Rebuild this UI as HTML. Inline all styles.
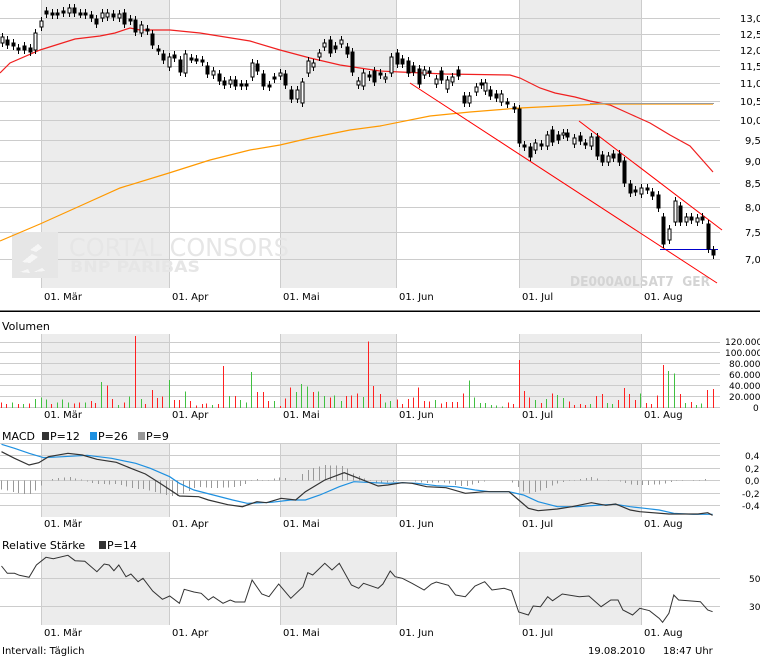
<!DOCTYPE html>
<html><head><meta charset="utf-8">
<style>
html,body{margin:0;padding:0;background:#fff;width:760px;height:657px;overflow:hidden}
svg{display:block}
text{font-family:"DejaVu Sans","Liberation Sans",sans-serif;font-size:10px;fill:#000}
.ax text{font-size:10px}
</style></head><body>
<svg id="s" width="760" height="657" viewBox="0 0 760 657" xmlns="http://www.w3.org/2000/svg" shape-rendering="crispEdges">
<g id="bands" fill="#ececec">
<rect x="41" y="0" width="128" height="288"/><rect x="280" y="0" width="116" height="288"/><rect x="519" y="0" width="122" height="288"/>
<rect x="41" y="334" width="128" height="74"/><rect x="280" y="334" width="116" height="74"/><rect x="519" y="334" width="122" height="74"/>
<rect x="41" y="443" width="128" height="74"/><rect x="280" y="443" width="116" height="74"/><rect x="519" y="443" width="122" height="74"/>
<rect x="41" y="552" width="128" height="73"/><rect x="280" y="552" width="116" height="73"/><rect x="519" y="552" width="122" height="73"/>
</g>
<g id="grid" stroke="#cccccc" stroke-width="1"></g>
<!-- watermark -->
<rect x="12" y="232" width="46" height="46" fill="#e6e6e6"/>
<g fill="#f6f6f6"><path d="M22 262 l10 -8 l6 3 l-8 6z M30 250 l8 -6 l4 4 l-6 4z M20 272 l8 -3 l2 4z M34 272 l8 -4 l3 3z"/></g>
<text x="69" y="256" textLength="220" lengthAdjust="spacingAndGlyphs" style="font-size:25px;fill:#e6e6e6;font-family:'DejaVu Sans',sans-serif">CORTAL CONSORS</text>
<text x="70" y="272" textLength="130" lengthAdjust="spacingAndGlyphs" style="font-size:16px;font-weight:bold;fill:#e6e6e6">BNP PARIBAS</text>
<text x="570" y="286" textLength="140" lengthAdjust="spacingAndGlyphs" style="font-size:13px;font-weight:bold;fill:#d4d4d4">DE000A0LSAT7&#160; GER</text>
<g id="main" shape-rendering="auto"></g>
<line x1="0" y1="311" x2="760" y2="311" stroke="#000" stroke-width="1.5"/>
<g class="ax">
<text x="740" y="22">13,0</text><text x="740" y="38">12,5</text><text x="740" y="54">12,0</text><text x="740" y="70">11,5</text><text x="740" y="87">11,0</text><text x="740" y="105">10,5</text><text x="740" y="124">10,0</text><text x="745" y="144">9,5</text><text x="745" y="165">9,0</text><text x="745" y="187">8,5</text><text x="745" y="211">8,0</text><text x="745" y="236">7,5</text><text x="745" y="263">7,0</text>
</g>
<g id="dates"></g>
<text x="2" y="330" style="font-size:11px">Volumen</text>
<g style="font-size:9px" class="vl">
<text x="725" y="345" style="font-size:9px">120.000</text><text x="725" y="356" style="font-size:9px">100.000</text><text x="729" y="367" style="font-size:9px">80.000</text><text x="729" y="378" style="font-size:9px">60.000</text><text x="729" y="389" style="font-size:9px">40.000</text><text x="729" y="400" style="font-size:9px">20.000</text><text x="753" y="411" style="font-size:9px">0</text>
</g>
<text x="2" y="440" style="font-size:11px">MACD</text>
<rect x="42" y="432" width="7" height="8" fill="#333"/><text x="50" y="440" style="font-size:11px">P=12</text>
<rect x="90" y="432" width="7" height="8" fill="#1e90e0"/><text x="98" y="440" style="font-size:11px">P=26</text>
<rect x="138" y="432" width="7" height="8" fill="#999"/><text x="146" y="440" style="font-size:11px">P=9</text>
<text x="745" y="459" style="font-size:9px">0,4</text><text x="745" y="472" style="font-size:9px">0,2</text><text x="745" y="484" style="font-size:9px">0,0</text><text x="742" y="497" style="font-size:9px">-0,2</text><text x="742" y="509" style="font-size:9px">-0,4</text>
<text x="2" y="549" style="font-size:11px">Relative Stärke</text>
<rect x="99" y="541" width="7" height="8" fill="#333"/><text x="107" y="549" style="font-size:11px">P=14</text>
<text x="749" y="582" style="font-size:9px">50</text><text x="749" y="610" style="font-size:9px">30</text>
<text x="2" y="654" style="font-size:10px">Intervall: Täglich</text>
<text x="588" y="654" style="font-size:10px">19.08.2010</text>
<text x="663" y="654" style="font-size:10px">18:47 Uhr</text>
</svg>
<script>
var NS="http://www.w3.org/2000/svg";
function el(p,t,a){var e=document.createElementNS(NS,t);for(var k in a)e.setAttribute(k,a[k]);p.appendChild(e);return e;}
var G=document.getElementById('grid'),M=document.getElementById('main'),D=document.getElementById('dates');
[18,34,50,66,83,101,120,140,161,183,207,232,259].forEach(function(y){el(G,'line',{x1:0,x2:720,y1:y+.5,y2:y+.5});});
[342,352,363,374,385,396,407].forEach(function(y){el(G,'line',{x1:0,x2:720,y1:y+.5,y2:y+.5});});
[443,455,468,480,493,505].forEach(function(y){el(G,'line',{x1:0,x2:720,y1:y+.5,y2:y+.5});});
[578,606].forEach(function(y){el(G,'line',{x1:0,x2:720,y1:y+.5,y2:y+.5});});
[[0,288],[334,408],[443,517],[552,625]].forEach(function(r){[41,169,280,396,519,641].forEach(function(x){el(G,'line',{x1:x+.5,x2:x+.5,y1:r[0],y2:r[1]});});});
var dl=[["01. Mär",44],["01. Apr",172],["01. Mai",283],["01. Jun",399],["01. Jul",522],["01. Aug",644]];
[300,418,527,636].forEach(function(y){dl.forEach(function(d){var t=el(D,'text',{x:d[1],y:y});t.textContent=d[0];});});
function pl(pts,col,w,sx,oy,sy){var s=pts.map(function(p){return (p[0]*(sx||1)).toFixed(1)+","+((oy||0)+p[1]*(sy||1)).toFixed(1);}).join(" ");el(M,'polyline',{points:s,fill:'none',stroke:col,'stroke-width':w||1});}
pl([[0,73],[10,63],[40,50],[75,39],[100,36],[115,33],[130,28],[140,30],[170,30],[200,33],[250,41],[280,50],[310,58],[340,65],[380,71],[400,72],[445,74],[510,75],[520,78],[540,88],[555,93],[575,97],[590,101],[610,105],[630,114],[650,123],[670,135],[690,146],[713,172]],'#f02020',1.2);
pl([[0,241],[40,224],[80,206],[120,188],[169,173],[210,160],[250,150],[280,145],[310,138],[350,130],[380,126],[430,116],[470,112],[520,108],[580,105],[600,104],[713,104]],'#ff9900',1.2);
el(M,'line',{x1:590,y1:103.5,x2:714,y2:103.5,stroke:'#999','stroke-width':1});
el(M,'line',{x1:410,y1:83,x2:717,y2:283,stroke:'#ff0000','stroke-width':1});
el(M,'line',{x1:579,y1:121,x2:722,y2:230,stroke:'#ff0000','stroke-width':1});
el(M,'line',{x1:660,y1:249.5,x2:718,y2:249.5,stroke:'#0000cc','stroke-width':1});
var C=[[2,37,43,0],[7,40,45,1],[13,43,46,1],[18,48,50,1],[24,46,50,1],[30,48,52,1],[35,33,50,0],[41,21,27,0],[46,11,14,1],[52,13,15,1],[57,13,15,1],[63,11,13,1],[69,8,13,0],[74,8,13,1],[80,13,14,1],[85,13,15,1],[91,15,18,1],[96,19,24,1],[102,13,18,0],[107,13,17,0],[113,14,17,1],[119,14,18,0],[124,13,24,1],[130,19,21,1],[135,20,32,1],[141,25,33,0],[147,29,31,1],[152,34,45,1],[158,49,51,1],[163,54,60,1],[169,57,67,0],[174,55,58,1],[180,60,72,1],[185,54,73,0],[191,58,59,1],[196,59,60,1],[202,60,62,1],[207,66,74,1],[213,71,75,0],[219,74,81,1],[224,81,85,1],[230,80,84,0],[235,80,86,1],[241,84,86,1],[246,84,86,1],[252,63,77,0],[257,64,71,1],[263,74,86,1],[269,85,87,1],[274,77,79,1],[280,73,76,0],[285,74,85,1],[291,90,99,1],[297,90,99,0],[302,82,103,0],[308,61,73,0],[313,63,67,0],[319,53,57,0],[324,43,47,0],[330,40,53,1],[335,46,49,1],[341,40,44,0],[347,47,54,1],[352,52,72,1],[358,81,85,0],[363,73,86,0],[369,75,77,1],[374,71,82,1],[380,73,75,1],[385,77,79,0],[391,57,73,0],[397,53,64,1],[402,59,64,1],[408,61,73,1],[413,66,72,1],[419,69,84,1],[424,70,75,0],[429,71,73,1],[436,79,84,0],[441,71,80,1],[447,80,89,0],[452,77,82,0],[458,70,76,1],[464,96,103,1],[469,96,103,0],[476,87,92,0],[481,83,85,1],[485,83,91,0],[490,90,96,1],[496,94,98,1],[501,94,102,0],[507,102,104,1],[514,107,109,1],[519,109,143,1],[524,145,147,1],[530,147,157,1],[535,143,150,0],[541,144,146,1],[547,135,146,0],[552,130,142,1],[558,135,140,1],[563,133,135,0],[567,133,137,1],[574,138,144,0],[580,136,141,1],[585,143,145,1],[591,137,146,0],[597,137,156,1],[602,155,162,1],[608,156,162,0],[613,154,158,1],[619,154,162,1],[624,161,183,1],[630,184,193,1],[635,190,192,1],[641,188,194,0],[647,188,190,1],[652,192,196,1],[658,195,208,1],[663,217,244,1],[669,229,240,0],[675,201,222,0],[680,206,222,1],[686,217,222,0],[691,217,220,1],[697,218,222,0],[702,217,220,1],[708,224,249,1],[713,250,255,1]];
C.forEach(function(c){var x=c[0];el(M,'line',{x1:x+.5,x2:x+.5,y1:c[1]-4,y2:c[2]+4,stroke:'#000','stroke-width':1,'shape-rendering':'crispEdges'});
el(M,'rect',{x:x-1,y:c[1],width:3,height:Math.max(2,c[2]-c[1]),fill:c[3]?'#000':'#fff',stroke:'#000','stroke-width':1,'shape-rendering':'crispEdges'});});
var V=[[3,277,'r'],[12,282,'r'],[25,277,'g'],[37,282,'r'],[48,282,'g'],[60,280,'r'],[72,267,'g'],[84,262,'g'],[94,268,'g'],[106,282,'r'],[117,277,'g'],[128,268,'g'],[140,277,'g'],[152,280,'r'],[164,277,'r'],[175,277,'g'],[187,273,'r'],[197,279,'r'],[208,216,'g'],[220,226,'r'],[232,267,'r'],[244,285,'g'],[255,277,'r'],[267,259,'g'],[278,78,'r'],[290,267,'g'],[300,282,'r'],[313,240,'r'],[323,264,'r'],[335,259,'r'],[348,210,'g'],[358,270,'r'],[370,270,'r'],[381,244,'g'],[393,273,'r'],[404,287,'r'],[416,282,'r'],[426,280,'r'],[438,285,'g'],[450,282,'r'],[461,168,'r'],[473,258,'g'],[484,258,'r'],[496,270,'g'],[507,277,'g'],[518,186,'g'],[530,246,'r'],[542,246,'r'],[553,273,'r'],[565,273,'g'],[577,288,'r'],[588,266,'r'],[599,232,'r'],[610,246,'g'],[621,222,'g'],[633,230,'g'],[645,246,'r'],[656,244,'g'],[668,258,'g'],[680,262,'r'],[690,256,'g'],[703,273,'g'],[713,258,'r'],[725,256,'r'],[737,250,'r'],[748,261,'g'],[760,94,'r'],[770,228,'r'],[783,252,'r'],[794,277,'g'],[805,273,'g'],[818,268,'r'],[829,282,'r'],[841,267,'r'],[852,262,'r'],[863,232,'r'],[875,273,'r'],[886,275,'r'],[897,270,'g'],[909,280,'r'],[920,276,'r'],[932,276,'r'],[943,276,'r'],[955,250,'r'],[967,212,'g'],[978,262,'g'],[990,279,'g'],[1001,279,'g'],[1012,285,'g'],[1023,287,'g'],[1035,289,'g'],[1047,277,'r'],[1058,282,'r'],[1070,150,'r'],[1080,243,'r'],[1092,262,'r'],[1103,270,'g'],[1116,279,'r'],[1127,267,'g'],[1138,250,'r'],[1150,255,'g'],[1161,264,'g'],[1173,275,'r'],[1184,285,'r'],[1196,282,'r'],[1207,285,'r'],[1218,282,'g'],[1230,258,'r'],[1241,252,'r'],[1252,279,'g'],[1263,282,'g'],[1275,270,'r'],[1287,234,'r'],[1298,252,'r'],[1309,270,'r'],[1321,250,'g'],[1333,279,'r'],[1344,282,'r'],[1356,256,'r'],[1367,165,'r'],[1379,183,'g'],[1390,190,'g'],[1402,252,'r'],[1413,279,'g'],[1425,276,'r'],[1436,285,'g'],[1447,280,'g'],[1459,240,'r'],[1470,237,'r']];
var SX=1/2.063;
V.forEach(function(v){var x=Math.round(v[0]*SX)+.5;el(M,'line',{x1:x,x2:x,y1:310+v[1]/3,y2:408,stroke:v[2]=='r'?'#ff2020':'#40c040','stroke-width':1,'shape-rendering':'crispEdges'});});
var BK=[[3,425],[30,445],[60,465],[80,458],[100,440],[140,430],[170,435],[200,448],[240,457],[270,475],[300,492],[330,520],[370,558],[410,560],[430,570],[470,584],[500,590],[510,585],[530,575],[550,578],[580,565],[610,570],[630,545],[670,510],[710,488],[740,505],[780,528],[800,525],[830,518],[850,520],[880,530],[920,533],[960,550],[1000,545],[1050,545],[1070,570],[1090,595],[1110,602],[1150,597],[1180,590],[1220,578],[1250,586],[1270,582],[1300,600],[1320,605],[1380,612],[1440,612],[1460,608],[1470,616]];
var BL=[[3,403],[30,415],[60,430],[90,443],[130,440],[180,436],[230,445],[280,460],[310,475],[350,500],[370,520],[400,540],[440,555],[480,570],[510,580],[560,577],[600,570],[630,570],[660,555],[700,530],[730,515],[770,518],[800,520],[830,518],[860,520],[900,527],[940,530],[980,540],[1010,545],[1050,545],[1080,555],[1110,575],[1150,590],[1190,590],[1240,585],[1270,583],[1300,590],[1330,595],[1360,600],[1390,610],[1430,613],[1470,613]];
function interp(a,x){for(var i=1;i<a.length;i++){if(x<=a[i][0]){var p=a[i-1],q=a[i];return p[1]+(q[1]-p[1])*(x-p[0])/(q[0]-p[0]);}}return a[a.length-1][1];}
for(var xz=3;xz<=1470;xz+=11.7){var d=(interp(BL,xz)-interp(BK,xz))/3;var x=Math.round(xz*SX)+.5;var y0=480.5,y1=y0-d*1.2;el(M,'line',{x1:x,x2:x,y1:y0,y2:y1,stroke:'#999','stroke-width':1,'shape-rendering':'crispEdges'});}
pl(BL,'#1e90e0',1.2,SX,310,1/3);
pl(BK,'#333',1.2,SX,310,1/3);
var R=[[3,768],[15,790],[30,790],[40,796],[60,802],[75,765],[95,742],[110,746],[140,736],[155,752],[175,754],[200,785],[215,762],[225,765],[235,782],[245,765],[260,800],[270,792],[285,815],[295,805],[315,843],[335,868],[350,858],[370,880],[380,838],[400,846],[415,850],[430,870],[440,860],[460,880],[475,870],[485,876],[505,876],[520,810],[540,852],[555,860],[575,822],[600,865],[625,830],[635,788],[645,795],[670,760],[685,780],[700,760],[725,825],[740,835],[750,820],[780,835],[790,822],[805,783],[815,800],[830,805],[850,820],[875,840],[890,822],[900,816],[925,826],[940,855],[960,860],[980,828],[1000,815],[1015,840],[1040,835],[1055,842],[1070,906],[1090,915],[1100,888],[1115,890],[1130,860],[1140,872],[1160,852],[1195,860],[1215,858],[1240,890],[1260,870],[1275,870],[1285,900],[1305,915],[1320,895],[1340,902],[1360,925],[1367,937],[1380,910],[1390,855],[1400,870],[1420,872],[1445,875],[1460,900],[1470,905]];
pl(R,'#333',1,SX,310,1/3);
</script>
</body></html>
